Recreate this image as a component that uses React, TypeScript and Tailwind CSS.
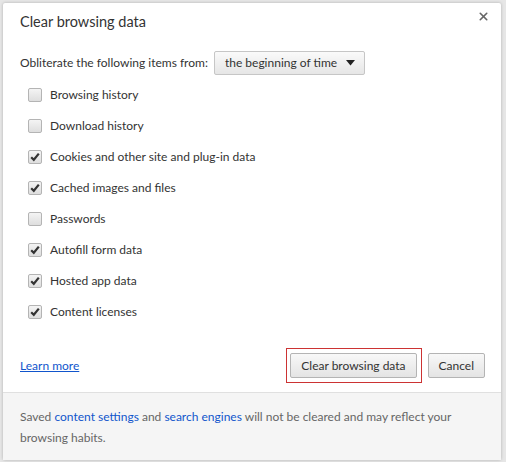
import { X } from 'lucide-react'

const items = [
  { label: 'Browsing history', checked: false },
  { label: 'Download history', checked: false },
  { label: 'Cookies and other site and plug-in data', checked: true },
  { label: 'Cached images and files', checked: true },
  { label: 'Passwords', checked: false },
  { label: 'Autofill form data', checked: true },
  { label: 'Hosted app data', checked: true },
  { label: 'Content licenses', checked: true },
]

function Checkbox({ checked }: { checked: boolean }) {
  return (
    <span className="flex h-[14px] w-[14px] items-center justify-center rounded-[2px] border border-[#b4b4b4] bg-gradient-to-b from-[#f4f4f4] to-[#dedede]">
      {checked && (
        <svg width="10" height="10" viewBox="0 0 10 10">
          <path d="M1.2 5.2 L3.8 7.8 L8.8 1.6" fill="none" stroke="#333" strokeWidth="2.2" />
        </svg>
      )}
    </span>
  )
}

export default function App() {
  return (
    <div
      className="h-[462px] w-[506px] bg-[#e6e6e6] pl-[3px] pt-[3px]"
      style={{ fontFamily: 'Lato, sans-serif' }}
    >
      <div className="flex h-[457px] w-[498px] flex-col rounded-[2px] bg-white text-[12px] text-[#333] shadow-[0_0_3px_rgba(0,0,0,0.25)]">
        <div className="relative px-[17px] pt-[8px]">
          <h1 className="text-[14.5px] leading-[22px] text-[#333]">Clear browsing data</h1>
          <button className="absolute right-[11px] top-[7px] text-[#666]">
            <X size={13} strokeWidth={3} />
          </button>
        </div>

        <div className="mt-[18px] flex items-center gap-[6px] px-[17px]">
          <span>Obliterate the following items from:</span>
          <span className="flex h-[24px] items-center gap-[9px] rounded-[2px] border border-[#c6c6c6] bg-gradient-to-b from-[#fafafa] to-[#e6e6e6] pl-[10px] pr-[9px]">
            the beginning of time
            <svg width="9" height="6" viewBox="0 0 9 6">
              <path d="M0 0 H9 L4.5 5.5 Z" fill="#222" />
            </svg>
          </span>
        </div>

        <div className="mt-[4px] flex flex-col px-[25px]">
          {items.map((item) => (
            <label key={item.label} className="flex h-[31px] items-center gap-[8px]">
              <Checkbox checked={item.checked} />
              <span>{item.label}</span>
            </label>
          ))}
        </div>

        <div className="mt-[21px] flex items-center justify-between pl-[17px] pr-[16px]">
          <a className="text-[#15c] underline">Learn more</a>
          <div className="flex items-center gap-[6px]">
            <span className="border border-[#cc3333] pb-[4px] pl-[3px] pr-[4px] pt-[4px]">
              <button className="h-[25px] rounded-[2px] border border-[#b4b4b4] bg-gradient-to-b from-[#f8f8f8] to-[#e4e4e4] px-[10px] text-[#333]">
                Clear browsing data
              </button>
            </span>
            <button className="h-[25px] rounded-[2px] border border-[#b4b4b4] bg-gradient-to-b from-[#f8f8f8] to-[#e4e4e4] px-[10px] text-[#333]">
              Cancel
            </button>
          </div>
        </div>

        <div className="mt-[9px] flex-1 border-t border-[#e0e0e0] bg-[#f5f5f5] px-[17px] pt-[13px] leading-[21px] text-[#666]">
          <p>
            Saved <span className="text-[#15c]">content settings</span> and{' '}
            <span className="text-[#15c]">search engines</span> will not be cleared and may reflect your
            browsing habits.
          </p>
        </div>
      </div>
    </div>
  )
}
